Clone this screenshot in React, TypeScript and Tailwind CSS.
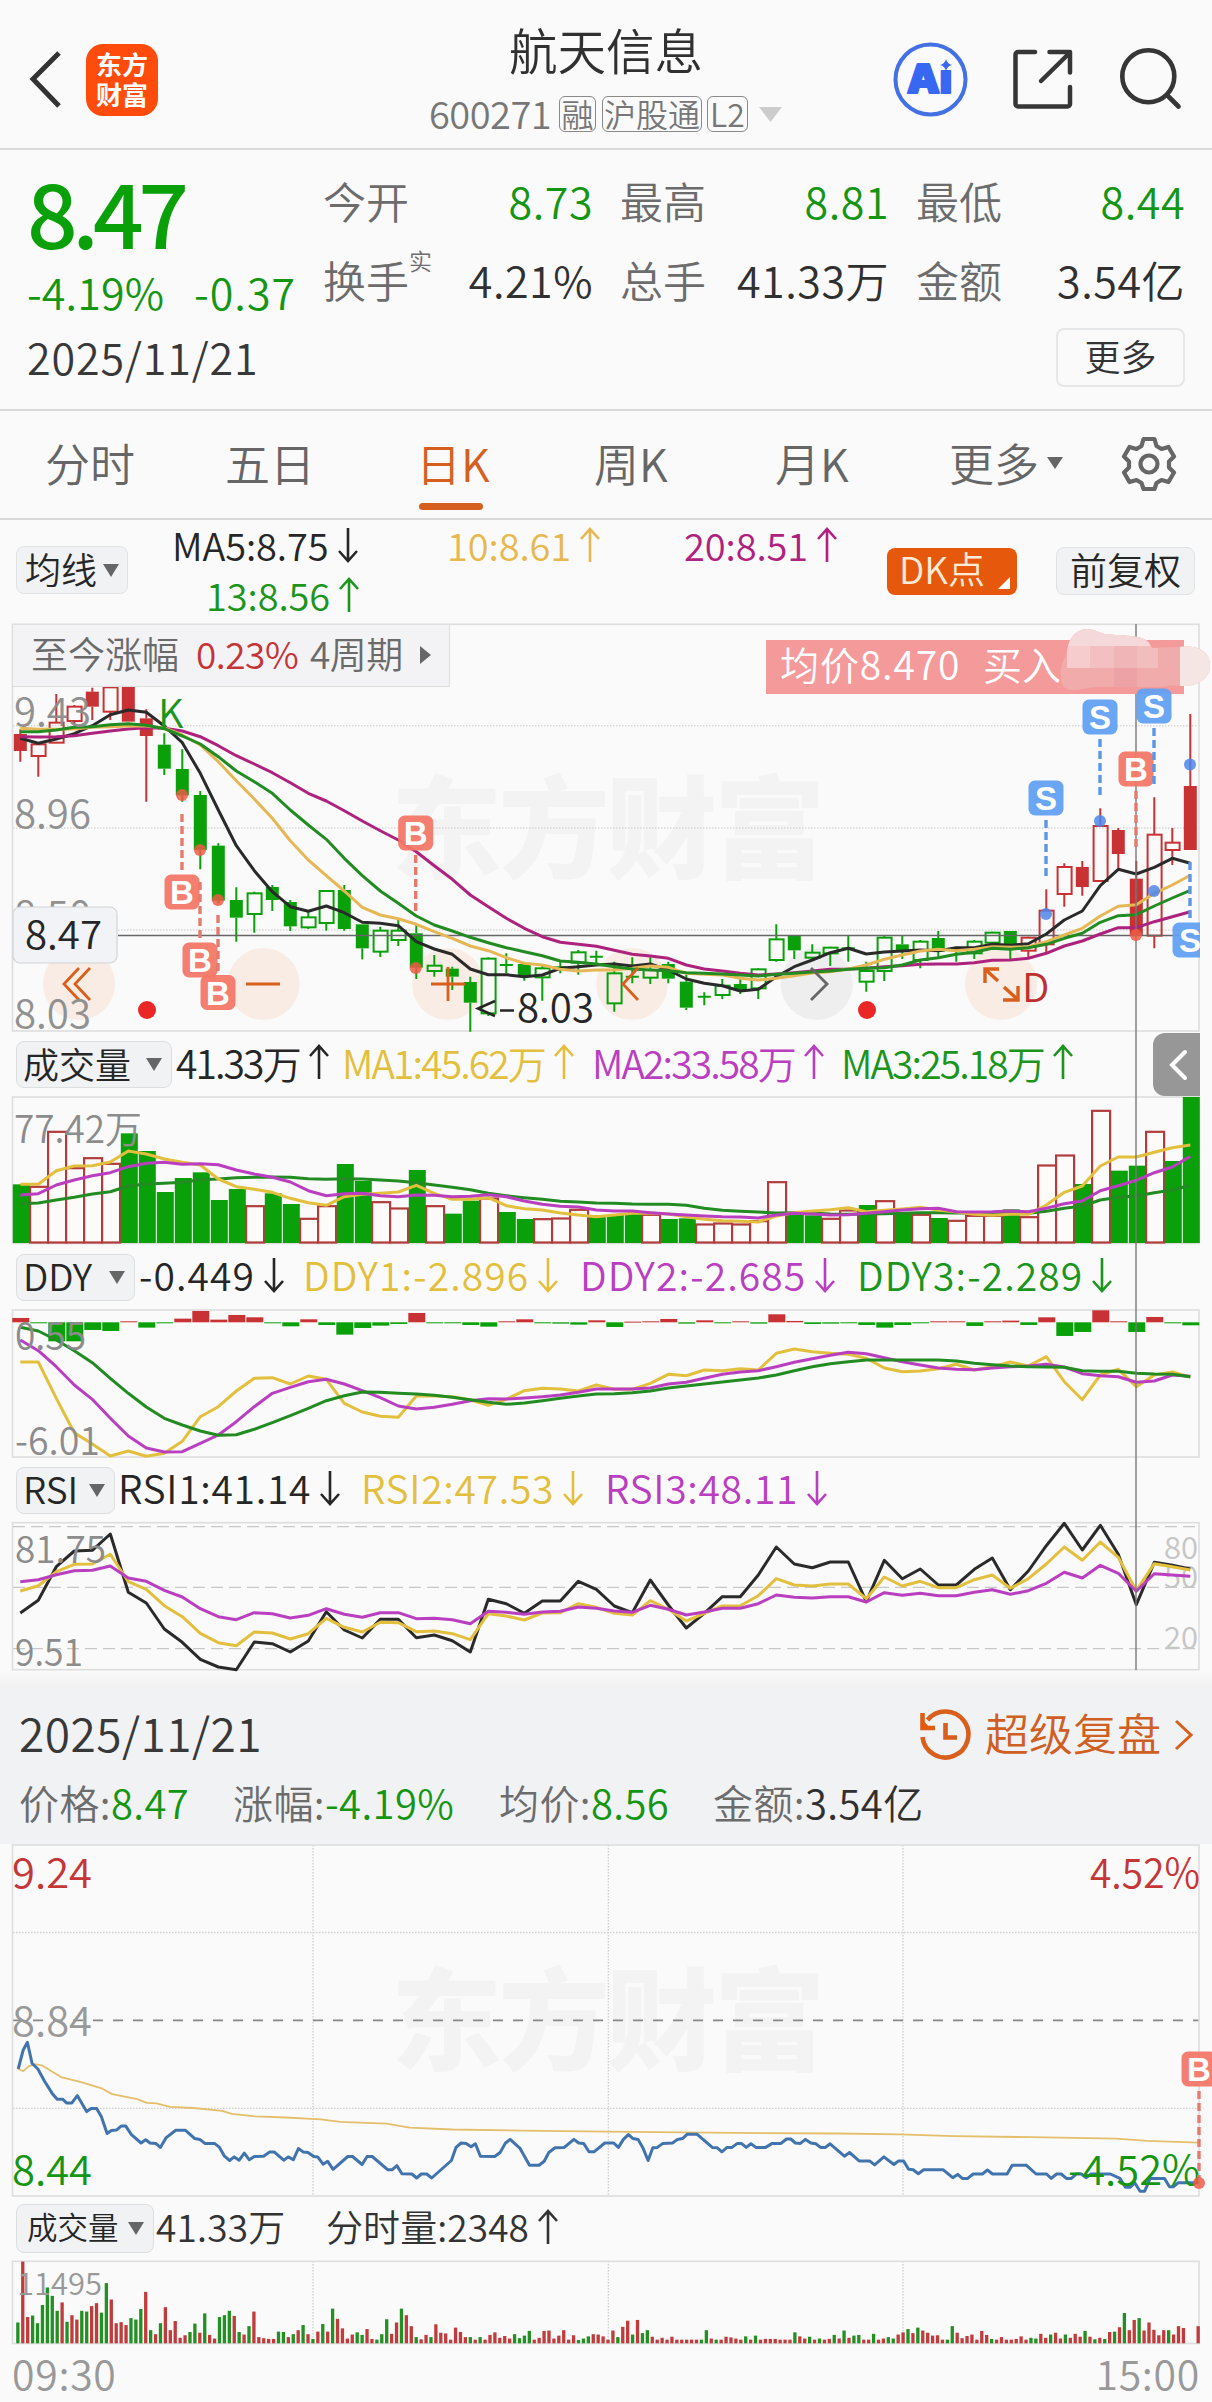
import React from 'react';

const GREEN = '#0aa00a';
const LINE_GREEN = '#228b22';
const RED = '#c93234';
const YELLOW = '#e3bf3e';
const PURPLE = '#b93fc0';

// every daily chart shares the same 66 slots
const slotX = (i: number) => 20.3 + i * 18;

const linePoints = (values: number[], top: number) =>
  values.map((v, i) => `${slotX(i).toFixed(1)},${(top + v / 3).toFixed(1)}`).join(' ');

// [kind, body top, body bottom, high, low] - upper case is a filled body, "+" is a doji
type Candle = [string, number, number, number, number];

const candles: Candle[] = [
  ['R', 372, 423, 358, 455], ['r', 403, 438, 400, 500], ['r', 338, 398, 252, 398], ['r', 290, 333, 285, 345],
  ['R', 245, 290, 233, 330], ['r', 232, 305, 228, 330], ['R', 228, 335, 228, 335], ['R', 325, 378, 298, 575],
  ['G', 404, 476, 370, 495], ['G', 477, 556, 418, 575], ['G', 555, 720, 543, 778], ['G', 707, 872, 700, 880],
  ['G', 870, 923, 832, 995], ['g', 850, 912, 845, 968], ['G', 831, 870, 825, 903], ['G', 876, 949, 870, 963],
  ['g', 922, 952, 905, 957], ['g', 843, 939, 843, 962], ['G', 840, 957, 825, 962], ['G', 943, 1015, 943, 1048],
  ['g', 962, 1025, 950, 1041], ['g', 962, 990, 930, 1008], ['G', 970, 1073, 945, 1107], ['g', 1067, 1083, 1035, 1100],
  ['G', 1076, 1100, 1070, 1140], ['G', 1116, 1178, 1100, 1265], ['g', 1046, 1210, 1042, 1218], ['+', 1065, 1065, 1030, 1090],
  ['G', 1062, 1100, 1058, 1112], ['g', 1075, 1102, 1068, 1172], ['+', 1072, 1072, 1055, 1090], ['g', 1027, 1058, 1020, 1094],
  ['+', 1040, 1040, 1022, 1062], ['g', 1090, 1180, 1055, 1205], ['+', 1100, 1100, 1042, 1120], ['g', 1080, 1103, 1042, 1122],
  ['G', 1062, 1106, 1055, 1120], ['G', 1115, 1193, 1095, 1200], ['+', 1160, 1160, 1147, 1186], ['g', 1127, 1155, 1107, 1167],
  ['G', 1122, 1140, 1105, 1152], ['g', 1078, 1135, 1075, 1167], ['g', 988, 1050, 943, 1055], ['G', 978, 1021, 978, 1047],
  ['g', 1028, 1043, 1003, 1047], ['g', 1013, 1030, 1010, 1068], ['+', 1015, 1015, 978, 1055], ['g', 1083, 1115, 1055, 1145],
  ['g', 983, 1083, 978, 1113], ['G', 1003, 1022, 978, 1047], ['g', 995, 1050, 990, 1075], ['G', 984, 1025, 963, 1040],
  ['+', 1020, 1020, 1010, 1055], ['g', 995, 1030, 990, 1047], ['g', 968, 998, 965, 1000], ['G', 963, 1015, 963, 1053],
  ['r', 983, 1022, 980, 1047], ['r', 902, 1003, 838, 1030], ['r', 771, 852, 760, 890], ['R', 771, 831, 753, 857],
  ['r', 648, 813, 595, 815], ['R', 660, 732, 654, 775], ['R', 806, 978, 753, 978], ['r', 674, 977, 562, 1015],
  ['r', 698, 720, 654, 765], ['R', 528, 720, 312, 720],
];

const ma5 = [385, 400, 387, 371, 347, 314, 300, 307, 348, 398, 490, 600, 707, 782, 845, 890, 904, 888, 908, 937, 940, 947, 995, 1017, 1033, 1077, 1094, 1094, 1100, 1095, 1075, 1070, 1065, 1062, 1068, 1062, 1080, 1107, 1120, 1127, 1143, 1138, 1100, 1070, 1050, 1028, 1015, 1032, 1026, 1023, 1020, 1022, 1013, 1013, 1003, 1006, 1001, 972, 930, 903, 827, 778, 792, 772, 745, 760];
const ma10 = [355, 358, 358, 357, 352, 350, 348, 348, 354, 375, 405, 455, 512, 567, 625, 692, 750, 797, 843, 892, 915, 926, 943, 965, 985, 1008, 1022, 1043, 1060, 1065, 1078, 1083, 1080, 1080, 1075, 1068, 1072, 1090, 1093, 1095, 1105, 1110, 1105, 1097, 1089, 1085, 1077, 1065, 1048, 1035, 1023, 1018, 1022, 1018, 1010, 1012, 1010, 995, 975, 955, 918, 889, 884, 850, 825, 796];
const ma13 = [365, 365, 360, 352, 350, 344, 341, 346, 356, 378, 402, 440, 483, 515, 550, 600, 645, 688, 745, 797, 843, 880, 918, 945, 963, 982, 998, 1013, 1025, 1037, 1053, 1057, 1062, 1070, 1077, 1080, 1082, 1088, 1090, 1092, 1095, 1098, 1093, 1090, 1086, 1083, 1078, 1075, 1073, 1065, 1050, 1043, 1033, 1027, 1015, 1018, 1013, 1003, 985, 970, 937, 917, 914, 888, 864, 841];
const ma20 = [380, 381, 380, 377, 370, 363, 357, 353, 355, 363, 380, 407, 437, 462, 488, 518, 550, 573, 602, 633, 662, 690, 725, 767, 808, 855, 890, 925, 955, 980, 997, 1003, 1009, 1021, 1033, 1038, 1045, 1065, 1077, 1083, 1090, 1095, 1092, 1088, 1083, 1078, 1077, 1075, 1070, 1067, 1063, 1062, 1062, 1058, 1051, 1050, 1045, 1030, 1008, 993, 972, 953, 953, 935, 920, 905];

const volumes = 'G463 R469 R304 R413 R383 R400 G310 G363 G486 G444 G427 G510 G477 R527 G490 G522 R565 R527 G402 G453 R515 R534 G420 R527 G551 G512 R504 G546 G567 R566 R564 R538 G556 G555 G552 R553 G567 G565 R582 R579 R582 R572 R455 G555 G556 R565 R540 G525 R512 G546 R553 G564 R571 R556 R556 G538 R560 R405 R375 G462 R241 G422 G407 R304 G393 G201'.split(' ');
const volMa1 = [463, 463, 422, 408, 407, 396, 363, 372, 387, 397, 405, 447, 470, 478, 487, 505, 518, 526, 500, 493, 490, 486, 466, 490, 508, 508, 503, 527, 536, 540, 549, 555, 560, 555, 550, 549, 552, 560, 568, 572, 574, 576, 558, 548, 543, 539, 533, 545, 541, 537, 532, 540, 546, 553, 556, 553, 553, 525, 487, 468, 408, 381, 381, 367, 353, 345];
const volMa2 = [495, 491, 465, 450, 437, 428, 410, 400, 397, 403, 401, 404, 420, 432, 442, 456, 482, 497, 491, 490, 497, 500, 495, 496, 500, 499, 494, 500, 513, 523, 529, 531, 540, 543, 543, 548, 552, 555, 558, 560, 561, 564, 555, 550, 552, 555, 554, 550, 545, 540, 536, 535, 545, 546, 545, 543, 545, 535, 521, 513, 482, 467, 451, 428, 411, 379];
const volMa3 = [521, 519, 510, 502, 492, 485, 468, 462, 460, 457, 449, 447, 443, 442, 441, 442, 446, 448, 446, 447, 450, 453, 458, 465, 472, 479, 490, 497, 503, 508, 514, 516, 519, 520, 522, 523, 523, 526, 535, 541, 544, 546, 549, 548, 549, 552, 553, 552, 551, 550, 548, 548, 549, 549, 550, 550, 550, 544, 535, 528, 510, 502, 498, 488, 480, 466];

const ddyBars = [13, -2, -57, -57, -23, -26, 3, -16, -2, 11, 34, 8, 22, 15, -2, -12, 9, -8, -37, -17, -10, -5, 28, -2, -3, -8, -13, 3, 9, -2, -4, -7, 6, -14, 2, 3, 10, -4, 6, -2, 3, -4, 24, 4, -5, -4, -2, -8, -16, -8, -2, 3, 3, -11, 3, 5, -8, 15, -41, -29, 36, 3, -29, 16, -2, -9];
const ddy1 = [996, 996, 1105, 1208, 1242, 1278, 1263, 1279, 1270, 1234, 1160, 1130, 1083, 1045, 1043, 1062, 1038, 1048, 1120, 1146, 1159, 1162, 1098, 1098, 1100, 1110, 1126, 1108, 1082, 1075, 1077, 1083, 1065, 1078, 1078, 1060, 1033, 1037, 1020, 1022, 1016, 1020, 970, 957, 965, 970, 973, 985, 1014, 1025, 1023, 1016, 1003, 1020, 1010, 996, 1008, 980, 1055, 1109, 1035, 1018, 1070, 1035, 1026, 1042];
const ddy2 = [930, 962, 1010, 1065, 1108, 1165, 1218, 1254, 1266, 1265, 1240, 1215, 1175, 1130, 1090, 1072, 1055, 1048, 1062, 1082, 1103, 1128, 1137, 1132, 1123, 1112, 1106, 1107, 1104, 1100, 1095, 1087, 1077, 1077, 1077, 1074, 1062, 1057, 1045, 1033, 1026, 1022, 1010, 997, 986, 976, 967, 971, 983, 995, 1005, 1014, 1018, 1019, 1014, 1010, 1008, 1003, 1011, 1031, 1037, 1040, 1057, 1053, 1035, 1039];
const ddy3 = [892, 903, 930, 962, 998, 1045, 1090, 1131, 1165, 1185, 1203, 1216, 1214, 1198, 1178, 1157, 1135, 1112, 1097, 1086, 1087, 1090, 1092, 1096, 1102, 1109, 1117, 1123, 1119, 1112, 1105, 1098, 1092, 1091, 1088, 1083, 1074, 1068, 1062, 1056, 1050, 1044, 1035, 1022, 1010, 1001, 995, 990, 990, 990, 990, 990, 993, 1000, 1004, 1008, 1010, 1011, 1012, 1022, 1024, 1024, 1030, 1032, 1033, 1040];

const rsi1 = [489, 451, 350, 303, 301, 252, 427, 459, 537, 577, 628, 651, 659, 576, 581, 606, 573, 485, 540, 564, 508, 508, 563, 555, 572, 606, 448, 461, 490, 453, 453, 394, 418, 468, 488, 390, 465, 534, 490, 440, 440, 375, 291, 342, 353, 336, 336, 455, 331, 386, 357, 405, 405, 358, 324, 419, 363, 287, 220, 300, 226, 313, 464, 337, 346, 357];
const rsi2 = [423, 407, 365, 343, 342, 313, 395, 418, 467, 500, 550, 578, 587, 546, 549, 567, 551, 505, 532, 546, 517, 518, 545, 543, 551, 569, 491, 498, 510, 489, 488, 461, 472, 490, 495, 452, 478, 513, 490, 468, 467, 437, 386, 405, 408, 402, 402, 446, 381, 408, 394, 413, 413, 389, 375, 415, 386, 342, 291, 331, 276, 322, 422, 341, 350, 360];
const rsi3 = [395, 389, 374, 362, 361, 348, 384, 394, 421, 441, 476, 500, 509, 488, 491, 504, 496, 476, 493, 502, 488, 488, 506, 505, 509, 521, 484, 487, 493, 486, 484, 471, 475, 483, 487, 466, 478, 495, 486, 475, 475, 461, 435, 442, 444, 440, 440, 456, 428, 436, 430, 437, 437, 427, 419, 433, 422, 400, 367, 384, 346, 370, 424, 371, 375, 379];

const minutePrice = [47, 655, 60, 603, 71, 582, 83, 640, 98, 655, 115, 688, 135, 722, 148, 738, 162, 738, 172, 748, 186, 748, 200, 728, 224, 772, 236, 763, 250, 763, 262, 785, 277, 832, 288, 824, 302, 822, 314, 811, 325, 811, 340, 835, 365, 858, 377, 849, 388, 858, 403, 859, 415, 870, 430, 843, 455, 823, 480, 823, 504, 846, 517, 848, 530, 859, 555, 859, 568, 870, 580, 893, 594, 906, 606, 896, 619, 905, 632, 886, 645, 904, 658, 895, 682, 894, 697, 883, 710, 883, 734, 905, 746, 896, 759, 904, 772, 873, 785, 883, 797, 884, 812, 895, 822, 896, 836, 916, 848, 908, 862, 930, 900, 895, 912, 895, 937, 917, 950, 895, 963, 895, 1003, 931, 1015, 931, 1027, 920, 1040, 942, 1066, 943, 1078, 954, 1090, 943, 1104, 943, 1117, 954, 1168, 906, 1180, 870, 1193, 858, 1206, 859, 1219, 868, 1230, 860, 1243, 894, 1280, 895, 1294, 884, 1308, 858, 1320, 848, 1345, 872, 1370, 919, 1395, 919, 1408, 908, 1420, 884, 1436, 871, 1460, 870, 1485, 848, 1497, 858, 1510, 859, 1524, 882, 1537, 882, 1565, 858, 1588, 858, 1600, 870, 1613, 848, 1626, 835, 1638, 846, 1651, 848, 1663, 870, 1677, 906, 1689, 871, 1701, 870, 1715, 859, 1740, 858, 1753, 848, 1766, 846, 1778, 834, 1804, 834, 1843, 870, 1856, 871, 1868, 882, 1881, 870, 1894, 870, 1908, 859, 1918, 859, 1931, 870, 1943, 860, 1956, 870, 1981, 870, 1998, 859, 2021, 859, 2035, 847, 2046, 847, 2058, 858, 2071, 859, 2084, 848, 2098, 858, 2111, 860, 2123, 870, 2136, 870, 2148, 860, 2185, 894, 2198, 884, 2223, 907, 2250, 907, 2263, 918, 2287, 896, 2313, 917, 2325, 907, 2338, 907, 2351, 930, 2363, 931, 2376, 942, 2390, 931, 2440, 931, 2465, 953, 2478, 944, 2490, 955, 2504, 955, 2518, 943, 2542, 943, 2555, 932, 2568, 943, 2606, 943, 2619, 919, 2656, 919, 2681, 943, 2708, 943, 2720, 955, 2734, 943, 2746, 943, 2759, 955, 2772, 955, 2785, 943, 2798, 943, 2810, 953, 2823, 943, 2873, 943, 2898, 955, 2912, 979, 2925, 979, 2936, 967, 2950, 990, 2962, 990, 2976, 955, 3013, 955, 3026, 978, 3036, 978, 3048, 967, 3102, 967];
const minuteAverage = [47, 655, 60, 661, 74, 648, 90, 642, 108, 645, 160, 678, 210, 691, 265, 709, 290, 724, 355, 738, 380, 748, 405, 749, 440, 759, 500, 762, 575, 770, 600, 778, 660, 785, 740, 788, 830, 793, 880, 800, 1000, 805, 1060, 816, 1170, 821, 1350, 824, 1568, 827, 1968, 831, 2168, 832, 2328, 834, 2468, 839, 2668, 842, 2888, 846, 2968, 852, 3102, 857];

// one bar a minute; positive rises, negative falls
const minuteVolume = [-57, 224, 72, -76, -55, -105, -153, -130, -89, 112, -59, 77, 65, -89, -87, 102, 110, -84, -165, 120, 55, 58, 50, -69, -65, -94, 141, -36, 25, -55, 99, 36, 61, 15, 22, -31, -54, 29, -82, 23, 13, -72, -77, -89, 75, -31, 24, -47, 87, 17, 14, 12, 12, -32, -31, 17, -25, 36, -50, 25, -12, 32, -53, 32, -95, 67, 41, 13, 24, -30, -23, 39, 12, -10, -25, -66, 26, 57, -95, 77, 47, -17, 11, 23, -17, 52, 29, 27, 10, 43, 31, 17, -17, 10, -17, 10, 23, 30, 15, 20, 13, -25, -14, -21, -34, 10, 15, 34, 35, 13, 21, 36, 10, 22, -9, -13, -19, 25, 24, 19, 10, 35, -17, 45, 62, -24, 64, -28, -36, 18, 10, 15, 10, 18, 10, 10, 10, 10, 10, -10, -36, 13, -10, 10, 18, 16, 13, 10, -19, 10, -21, 10, 12, 12, 12, 10, 10, 10, -30, 19, 13, -18, 10, -13, 10, 12, -23, 13, -35, 15, -21, -23, 10, 10, -26, 10, 13, -17, -13, 24, 30, -39, 28, -43, 35, 29, 21, 22, 10, -10, -47, 29, 14, 20, 24, 10, 34, 23, -12, 10, 17, 10, 10, 12, 19, 10, -15, -13, 26, 15, -24, 29, 13, -24, 15, 26, 18, -34, 18, -11, 15, -12, 31, -32, 44, -83, 36, 64, -69, 35, 57, 37, 22, 36, -36, 24, 47, 42, 0, 0, 47];

const minutePoints = (values: number[]) => {
  const points: string[] = [];
  for (let i = 0; i < values.length; i += 2) {
    points.push(`${(values[i] / 2.5875).toFixed(1)},${(1830 + values[i + 1] / 2.741).toFixed(1)}`);
  }
  return points.join(' ');
};

function Line({ points, color, width = 3 }: { points: string; color: string; width?: number }) {
  return <polyline points={points} fill="none" stroke={color} strokeWidth={width} strokeLinejoin="round" />;
}

function Frame({ top, bottom }: { top: number; bottom: number }) {
  return <rect x={12.5} y={top} width={1186.5} height={bottom - top} fill="none" stroke="#dedede" strokeWidth={1.6} />;
}

function Watermark({ y }: { y: number }) {
  return (
    <text x={391} y={y} fontSize={111} fontWeight={900} fill="#f3f3f4" textLength={434}>
      东方财富
    </text>
  );
}

function Label({ x, y, children, color = '#8c8c8c', size = 40, width, end }: {
  x: number; y: number; children: string; color?: string; size?: number; width?: number; end?: boolean;
}) {
  return (
    <text x={x} y={y} fill={color} fontSize={size} textLength={width} lengthAdjust="spacingAndGlyphs" textAnchor={end ? 'end' : 'start'}>
      {children}
    </text>
  );
}

interface MarkProps {
  kind: 'B' | 'S';
  x: number;
  y: number;
  from: number;
  to: number;
  dot: number;
}

function Mark({ kind, x, y, from, to, dot }: MarkProps) {
  const fill = kind === 'B' ? '#f37767' : '#62a0f3';
  return (
    <g>
      <line x1={x} x2={x} y1={from} y2={to} stroke={kind === 'B' ? '#e57a6c' : '#5b97e6'} strokeWidth={3.4} strokeDasharray="8 4" />
      <circle cx={x} cy={dot} r={6} fill={kind === 'B' ? '#ee5a45' : '#4c86ea'} opacity={0.85} />
      <rect x={x - 17.5} y={y - 17.5} width={35} height={35} rx={6.5} fill={fill} opacity={0.94} />
      <text x={x} y={y + 12} fill="#fff" fontSize={33} fontWeight={700} textAnchor="middle" fontFamily="Liberation Sans, sans-serif">
        {kind}
      </text>
    </g>
  );
}

const marks: MarkProps[] = [
  { kind: 'B', x: 182, y: 892, from: 814, to: 870, dot: 795 },
  { kind: 'B', x: 200, y: 960, from: 882, to: 938, dot: 850 },
  { kind: 'B', x: 218, y: 992.5, from: 915, to: 971, dot: 900 },
  { kind: 'B', x: 415.7, y: 833, from: 855, to: 911, dot: 968 },
  { kind: 'B', x: 1136, y: 769, from: 791, to: 848, dot: 935 },
  { kind: 'S', x: 1046, y: 798, from: 820, to: 876, dot: 914 },
  { kind: 'S', x: 1100, y: 717, from: 739, to: 795, dot: 821 },
  { kind: 'S', x: 1154, y: 706, from: 728, to: 784, dot: 891 },
  { kind: 'S', x: 1190, y: 940, from: 862, to: 918, dot: 764.5 },
];

function Arrow({ up }: { up?: boolean }) {
  return (
    <svg className="ml-[9px] h-9 w-5 shrink-0" viewBox="0 0 20 36" fill="none" stroke="currentColor" strokeWidth={2.6}>
      <path d={up ? 'M10 35V2M1 12l9-10 9 10' : 'M10 1v33M1 24l9 10 9-10'} />
    </svg>
  );
}

function Caret({ className }: { className: string }) {
  return (
    <svg className={className} viewBox="0 0 16 13" preserveAspectRatio="none">
      <path d="M0 0h16L8 13z" fill="currentColor" />
    </svg>
  );
}

function Picker({ label, className }: { label: string; className: string }) {
  return (
    <button className={`flex shrink-0 items-center justify-between rounded-lg border border-[#dcdee0] bg-[#f1f2f4] pr-[9px] text-[#262626] ${className}`}>
      <span className="pb-1">{label}</span>
      <Caret className="h-[13px] w-4 text-[#666]" />
    </button>
  );
}

interface Reading {
  text: string;
  up?: boolean;
  className: string;
}

function Readings({ items }: { items: Reading[] }) {
  return (
    <>
      {items.map(({ text, up, className }) => (
        <div key={text} className={`flex shrink-0 items-center pb-[5px] text-[39px] leading-none whitespace-nowrap ${className}`}>
          {text}
          <Arrow up={up} />
        </div>
      ))}
    </>
  );
}

function Header() {
  return (
    <header className="flex h-[150px] items-start border-b-2 border-[#dadada]">
      <svg className="mt-[50px] ml-7 h-[60px] w-9" viewBox="0 0 36 60" fill="none" stroke="#333" strokeWidth={5}>
        <path d="M31 3L5 29l26 27" />
      </svg>
      <div className="mt-11 ml-[22px] flex size-[72px] flex-col items-center justify-center rounded-[17px] bg-[#ff4b0c] pb-[3px] text-[26px] leading-[30px] font-bold text-white">
        <span>东方</span>
        <span>财富</span>
      </div>
      <div className="ml-[271px] flex w-[353px] flex-col">
        <h1 className="mt-[19px] ml-[80px] text-[48.5px] leading-[60px] text-[#303030]">航天信息</h1>
        <div className="mt-[17px] flex h-9 items-center text-[32px] leading-none text-[#777]">
          <span className="w-[130px] pb-[3px] text-[38px] tracking-[-0.5px]">600271</span>
          <span className="flex h-9 w-[37px] items-center justify-center rounded-md border-[1.5px] border-[#8a8a8a] pb-0.5">融</span>
          <span className="ml-1.5 flex h-9 w-[100px] items-center justify-center rounded-md border-[1.5px] border-[#8a8a8a] pb-0.5">沪股通</span>
          <span className="ml-[5px] flex h-9 w-[41px] items-center justify-center rounded-md border-[1.5px] border-[#8a8a8a] pb-0.5">L2</span>
          <Caret className="ml-[11px] h-[15px] w-[23px] text-[#ccc]" />
        </div>
      </div>
      <svg className="mt-[42px] ml-[111px] size-[75px]" viewBox="0 0 75 75">
        <circle cx="37.5" cy="37.5" r="35" fill="none" stroke="#4470e6" strokeWidth={4} />
        <text
          x={14}
          y={50.5}
          fontSize={40}
          fontWeight={900}
          fill="#3867f2"
          stroke="#3867f2"
          strokeWidth={2.2}
          strokeLinejoin="round"
          textLength={45}
          lengthAdjust="spacingAndGlyphs"
          fontFamily="Inter, sans-serif"
        >
          Aı
        </text>
        <path d="M53 17q1.300 4.800 6 6-4.700 1.200-6 6-1.300-4.800-6-6 4.700-1.200 6-6z" fill="#3867f2" />
      </svg>
      <svg className="mt-[47px] ml-[43px] h-16 w-16" viewBox="0 0 64 64" fill="none" stroke="#363636" strokeWidth={4.500} strokeLinecap="round" strokeLinejoin="round">
        <path d="M24 5H7a2.500 2.500 0 0 0-2.500 2.500V57A2.500 2.500 0 0 0 7 59.500h49.500a2.500 2.500 0 0 0 2.500-2.500V40" />
        <path d="M38.500 5H59v20.500M58 6.500L30 34" />
      </svg>
      <svg className="mt-[46px] ml-[43px] h-16 w-16" viewBox="0 0 64 64" fill="none" stroke="#363636" strokeWidth={4.600} strokeLinecap="round">
        <circle cx="30.300" cy="30.300" r="26" />
        <path d="M50 50l10.500 10.500" />
      </svg>
    </header>
  );
}

function Stat({ label, value, note, className }: { label: string; value: string; note?: string; className: string }) {
  return (
    <div className="flex h-[60px] items-center justify-between text-[43px] leading-none whitespace-nowrap">
      <span className="relative text-[#6c6c6c]">
        {label}
        {note && <sup className="absolute -top-[9px] left-full text-[23px] leading-none">{note}</sup>}
      </span>
      <span className={`tracking-[0.5px] ${className}`}>{value}</span>
    </div>
  );
}

function Quote() {
  return (
    <section className="flex h-[261px] border-b-2 border-[#dadada] pl-[27px]">
      <div className="w-[296px] shrink-0 whitespace-nowrap text-[#149614]">
        <div className="mt-[17px] h-[88px] text-[89px] leading-[88px] font-medium tracking-[-5.6px] text-[#0aa00a]">8.47</div>
        <div className="mt-[11px] flex h-[50px] items-center text-[43px] tracking-[0.1px]">
          <span className="w-[167px]">-4.19%</span>
          <span className="tracking-[1px]">-0.37</span>
        </div>
        <div className="mt-[15px] flex h-[50px] items-center text-[43px] tracking-[0.9px] text-[#383838]">2025/11/21</div>
      </div>
      <div className="flex flex-col">
        <div className="mt-[20px] grid grid-cols-[270px_269px_269px] gap-x-[27px] gap-y-[19px]">
          <Stat label="今开" value="8.73" className="text-[#149614]" />
          <Stat label="最高" value="8.81" className="text-[#149614]" />
          <Stat label="最低" value="8.44" className="text-[#149614]" />
          <Stat label="换手" note="实" value="4.21%" className="text-[#303030]" />
          <Stat label="总手" value="41.33万" className="text-[#303030]" />
          <Stat label="金额" value="3.54亿" className="text-[#303030]" />
        </div>
        <button className="mt-[19px] h-[59px] w-[129px] self-end rounded-lg border-2 border-[#e6e7e9] pb-1.5 text-4xl leading-none text-[#333]">更多</button>
      </div>
    </section>
  );
}

function Tabs() {
  return (
    <nav className="flex h-[109px] border-b-2 border-[#dadada] pt-[22px] pl-[45px] text-[45px] leading-[60px] whitespace-nowrap text-[#666]">
      <span className="w-[180px]">分时</span>
      <span className="w-[191px]">五日</span>
      <span className="flex w-[178px] flex-col text-[#d55f1e]">
        日K
        <i className="mt-[10px] ml-[3px] h-[7px] w-16 rounded-full bg-[#d55f1e]" />
      </span>
      <span className="w-[181px]">周K</span>
      <span className="w-[174px]">月K</span>
      <span className="flex h-[60px] w-[172px] items-center">
        更多
        <Caret className="ml-2 h-3 w-4" />
      </span>
      <svg className="mt-[2px] size-[56px]" viewBox="0 0 56 56" fill="none" stroke="#666" strokeWidth={4.200} strokeLinejoin="round">
        <path d="M22.500 4h11l2 7 5 3 7-2 5.500 9.500-5 5v6l5 5L47.500 47l-7-2-5 3-2 6h-11l-2-6-5-3-7 2L3 37.500l5-5v-6l-5-5L8.500 12l7 2 5-3z" />
        <circle cx="28" cy="29" r="8.500" />
      </svg>
    </nav>
  );
}

function Averages() {
  return (
    <section className="flex h-[103px] pl-4 text-[#262626]">
      <button className="mt-[26px] flex h-12 w-[112px] items-center justify-between rounded-lg border border-[#e0e2e4] bg-[#f1f2f4] px-2 text-4xl leading-none">
        <span className="pb-1">均线</span>
        <Caret className="h-[13px] w-4 text-[#666]" />
      </button>
      <div className="ml-[44px] grid h-[98px] w-[715px] grid-cols-[275px_237px_203px] content-start leading-[50px] tracking-[-0.1px]">
        <div className="flex h-[50px] items-center text-[38px]">MA5:8.75<Arrow /></div>
        <div className="flex h-[50px] items-center text-[38px] text-[#e8b850]">10:8.61<Arrow up /></div>
        <div className="flex h-[50px] items-center text-[38px] text-[#b0217f]">20:8.51<Arrow up /></div>
        <div className="flex h-[50px] items-center pl-[34px] text-[38px] text-[#1b951b]">13:8.56<Arrow up /></div>
      </div>
      <button className="relative mt-7 h-[47px] w-[130px] rounded-lg bg-[#e6590c] pb-[7px] pl-3 text-left text-[37px] leading-none text-[#fdebd8]">
        DK点
        <svg className="absolute right-[7px] bottom-[6px] size-3" viewBox="0 0 12 12">
          <path d="M12 0v12H0z" fill="#fff" />
        </svg>
      </button>
      <button className="mt-[27px] ml-[39px] h-12 w-[139px] rounded-lg border border-[#e0e2e4] bg-[#f1f2f4] pb-1 text-[37px] leading-none">前复权</button>
    </section>
  );
}

function CandleShape({ candle, index }: { candle: Candle; index: number }) {
  const [kind, top, bottom, high, low] = candle;
  const x = slotX(index);
  const y = (v: number) => 610 + v / 3;
  const color = kind.toLowerCase() === 'r' ? RED : GREEN;
  if (kind === '+') {
    return <path d={`M${x} ${y(high)}V${y(low)}M${x - 6.5} ${y(top)}h13`} stroke={color} strokeWidth={2} />;
  }
  const solid = kind === 'R' || kind === 'G';
  return (
    <g stroke={color} strokeWidth={2}>
      <path d={`M${x} ${y(high)}V${y(top)}M${x} ${y(bottom)}V${y(low)}`} />
      {solid ? (
        <rect x={x - 6.5} y={y(top)} width={13} height={Math.max(1, y(bottom) - y(top))} fill={color} stroke="none" />
      ) : (
        <rect x={x - 6.7} y={y(top)} width={14} height={y(bottom) - y(top)} fill="none" />
      )}
    </g>
  );
}

function KChart() {
  return (
    <div className="relative h-[410px]">
      <svg className="block h-[410px] w-full" viewBox="0 623 1212 410">
        <Watermark y={870} />
        {[725.7, 828, 930].map((y) => (
          <line key={y} x1={13} x2={1199} y1={y} y2={y} stroke="#d9d9d9" strokeWidth={1.4} strokeDasharray="1.5 1.5" />
        ))}
        <Frame top={624.3} bottom={1031} />
        {[79, 263.5, 448, 632, 1001].map((x) => (
          <circle key={x} cx={x} cy={984} r={36} fill="#f9ece5" />
        ))}
        <circle cx={816.7} cy={984} r={36} fill="#eeeeef" />
        {candles.map((candle, i) => (
          <CandleShape key={i} candle={candle} index={i} />
        ))}
        <line x1={118} x2={1199} y1={935.5} y2={935.5} stroke="#666" strokeWidth={1.3} />
        <Line points={linePoints(ma5, 610)} color="#2a2a2a" />
        <Line points={linePoints(ma20, 610)} color="#ad227c" />
        <Line points={linePoints(ma10, 610)} color="#e6b855" />
        <Line points={linePoints(ma13, 610)} color={LINE_GREEN} />
        <g fill="none" stroke="#d8601c" strokeWidth={2.8}>
          <path d="M79 968l-15 16 15 16M90 968l-15 16 15 16" />
          <path d="M246 984h34" />
          <path d="M431 984h34M448 967v34" />
          <path d="M638 968l-15 16 15 16" />
          <path d="M999 969h-14v14M986 970l12 11M1003 1000h15v-14M1017 999l-13-12" strokeWidth={3.4} />
          <path d="M811 968l16 16-16 16" stroke="#666" />
        </g>
        <g opacity={0.95}>
          <Label x={14} y={726} width={77}>9.43</Label>
          <Label x={14} y={828} width={77}>8.96</Label>
          <Label x={14} y={929} width={77}>8.50</Label>
          <Label x={14} y={1028} width={77}>8.03</Label>
        </g>
        <rect x={13} y={907} width={104} height={56} rx={7} fill="#f2f3f6" stroke="#d2d4d8" strokeWidth={1.2} />
        <Label x={25} y={949} width={77} color="#262626">8.47</Label>
        <Label x={158} y={728} color="#1b951b">K</Label>
        <Label x={1022} y={1002} color="#bd3030">D</Label>
        <circle cx={147} cy={1010} r={9} fill="#ea2627" />
        <circle cx={867} cy={1010} r={9} fill="#ea2627" />
        <path d="M495 1001l-17 7.500 17 7.500M500 1010.500h14" fill="none" stroke="#262626" strokeWidth={2.600} />
        <Label x={517} y={1022} width={77} color="#262626">8.03</Label>
      </svg>
      <div className="absolute top-px left-3 flex h-[63px] w-[438px] items-center border border-[#dedede] bg-[#f3f3f6] pb-1 pl-[18px] text-[37px] leading-none whitespace-nowrap text-[#6a6a6a]">
        <span className="w-[165px]">至今涨幅</span>
        <span className="w-[114px] tracking-[-0.5px] text-[#c43636]">0.23%</span>
        <span className="w-[110px] tracking-[-0.5px]">4周期</span>
        <svg className="mt-[3px] h-[18px] w-[11px]" viewBox="0 0 11 18">
          <path d="M0 0l11 9-11 9z" fill="#666" />
        </svg>
      </div>
      <div className="absolute top-[17px] left-[766px] z-20 flex h-[54px] w-[418px] items-center bg-[#f49a9a] pb-[7px] pl-[14px] text-[39px] leading-none whitespace-nowrap text-white">
        <span className="w-[203px] tracking-[0.9px]">均价8.470</span>
        <span>买入</span>
      </div>
      <svg className="absolute top-0 left-0 z-20 h-[410px] w-full" viewBox="0 623 1212 410">
        <clipPath id="smudge">
          <path d="M1068 646c2-10 10-17 19-17 8 0 12 4 18 5 14 2 34 0 42 7 4 3 3 6 6 7l27-1c14-2 30 2 30 18 0 15-14 22-30 21-12-1-20 1-34 1l-50 0c-14 1-28 8-34-3-2-8-2-20 4-28z" />
        </clipPath>
        <g clipPath="url(#smudge)">
          <rect x={1055} y={625} width={160} height={70} fill="#f1abab" />
          <rect x={1055} y={625} width={100} height={21} fill="#f5d9da" />
          <rect x={1067} y={646} width={23} height={22} fill="#f6cccd" />
          <rect x={1090} y={646} width={24} height={22} fill="#f4bfc0" />
          <rect x={1114} y={646} width={23} height={22} fill="#efb5b7" />
          <rect x={1137} y={646} width={21} height={22} fill="#f1bdbd" />
          <rect x={1158} y={646} width={22} height={22} fill="#f0abab" />
          <rect x={1114} y={668} width={23} height={25} fill="#eda3a5" />
          <rect x={1180} y={640} width={35} height={50} fill="#f5e6e3" />
        </g>
        {marks.map((mark) => (
          <Mark key={`${mark.x}-${mark.y}`} {...mark} />
        ))}
        <rect x={1200} y={900} width={12} height={70} fill="#fafafa" />
      </svg>
    </div>
  );
}

function VolumeChart() {
  return (
    <svg className="block h-[149px] w-full" viewBox="0 1096 1212 149">
      <Frame top={1097} bottom={1243.5} />
      {volumes.map((item, i) => {
        const top = 1030 + Number(item.slice(1)) / 3;
        return item[0] === 'G' ? (
          <rect key={i} x={slotX(i) - 7.5} y={top} width={17} height={1243 - top} fill={GREEN} />
        ) : (
          <rect key={i} x={slotX(i) - 8.2} y={top + 0.5} width={18} height={1242 - top} fill="#fdfafa" stroke="#b23c3c" strokeWidth={2.2} />
        );
      })}
      <Line points={linePoints(volMa3, 1030)} color={LINE_GREEN} />
      <Line points={linePoints(volMa1, 1030)} color={YELLOW} />
      <Line points={linePoints(volMa2, 1030)} color={PURPLE} />
      <Label x={14} y={1143} size={38} width={128}>77.42万</Label>
    </svg>
  );
}

function DdyChart() {
  return (
    <svg className="block h-[150px] w-full" viewBox="0 1309 1212 150">
      <Frame top={1310} bottom={1457} />
      {ddyBars.map((v, i) => (
        <rect
          key={i}
          x={slotX(i) - 8}
          y={v > 0 ? 1322.3 - v / 3 : 1322.3}
          width={17}
          height={Math.max(1, Math.abs(v) / 3)}
          fill={v > 0 ? RED : GREEN}
        />
      ))}
      <Line points={linePoints(ddy1, 1030)} color={YELLOW} />
      <Line points={linePoints(ddy2, 1030)} color={PURPLE} />
      <Line points={linePoints(ddy3, 1030)} color={LINE_GREEN} />
      <Label x={15} y={1350} size={39} width={71}>0.55</Label>
      <Label x={15} y={1455} size={39} width={85}>-6.01</Label>
    </svg>
  );
}

function RsiChart() {
  return (
    <svg className="block h-[151px] w-full" viewBox="0 1521 1212 151">
      <Frame top={1522.7} bottom={1669.7} />
      {[1526.7, 1587.3, 1648.7].map((y) => (
        <line key={y} x1={13} x2={1199} y1={y} y2={y} stroke="#c8c8c8" strokeWidth={1.3} strokeDasharray="12 6" />
      ))}
      <Label x={1198} y={1559} size={31} color="#c6c6c6" end>80</Label>
      <Label x={1198} y={1588} size={31} color="#c6c6c6" end>50</Label>
      <Label x={1198} y={1649} size={31} color="#c6c6c6" end>20</Label>
      <Line points={linePoints(rsi1, 1450)} color="#2a2a2a" />
      <Line points={linePoints(rsi2, 1450)} color={YELLOW} />
      <Line points={linePoints(rsi3, 1450)} color={PURPLE} />
      <Label x={15} y={1562.5} size={38} width={91}>81.75</Label>
      <Label x={15} y={1666} size={38} width={68}>9.51</Label>
    </svg>
  );
}

function ReviewPanel() {
  return (
    <section className="h-[156px] bg-[#f1f2f4] pt-[17px] pl-[19px] whitespace-nowrap">
      <div className="flex h-[60px] items-center">
        <span className="w-[899px] pb-1.5 text-[46px] leading-none tracking-[0.5px] text-[#383838]">2025/11/21</span>
        <svg className="size-[54px]" viewBox="0 0 54 54" fill="none" stroke="#d8601c" strokeWidth={4.600}>
          <path d="M4.500 29a23 23 0 1 0 5-17" />
          <path d="M4.500 5v15H17M27.500 15v14.500H39" />
          <path d="M3 10l10 11H3z" fill="#e6590c" stroke="none" />
        </svg>
        <span className="ml-[13px] pb-1.5 text-[44px] leading-none text-[#cf5f22]">超级复盘</span>
        <svg className="ml-[13px] h-8 w-5" viewBox="0 0 20 32" fill="none" stroke="#d8601c" strokeWidth={3}>
          <path d="M2 2l15 14L2 30" />
        </svg>
      </div>
      <div className="mt-[7px] flex h-[60px] items-center text-[40px] leading-none tracking-[0.4px] text-[#6c6c6c]">
        <span className="w-[214px]">价格:<span className="text-[#149614]">8.47</span></span>
        <span className="w-[266px]">涨幅:<span className="text-[#149614]">-4.19%</span></span>
        <span className="w-[214px]">均价:<span className="text-[#149614]">8.56</span></span>
        <span>金额:<span className="text-[#303030]">3.54亿</span></span>
      </div>
    </section>
  );
}

function MinuteChart() {
  return (
    <svg className="block h-[353px] w-full" viewBox="0 1844 1212 353">
      <Watermark y={2062} />
      <g stroke="#d0d0d0" strokeWidth={1.3} strokeDasharray="1.5 1.5">
        {[313, 608.3, 903].map((x) => (
          <line key={x} x1={x} x2={x} y1={1845} y2={2196} />
        ))}
        <line x1={13} x2={1199} y1={1932.5} y2={1932.5} />
        <line x1={13} x2={1199} y1={2108.4} y2={2108.4} />
      </g>
      <line x1={13} x2={1199} y1={2020.4} y2={2020.4} stroke="#888" strokeWidth={1.8} strokeDasharray="10 10" />
      <Frame top={1845} bottom={2196} />
      <Line points={minutePoints(minuteAverage)} color="#e4be6a" width={1.8} />
      <Line points={minutePoints(minutePrice)} color="#4174ad" />
      <Label x={12} y={1888} size={41} width={80} color="#c53636">9.24</Label>
      <Label x={12} y={2036} size={41} width={80} color="#999">8.84</Label>
      <Label x={12} y={2185} size={41} width={80} color="#149614">8.44</Label>
      <Label x={1200} y={1888} size={41} width={110} color="#c53636" end>4.52%</Label>
      <Label x={1200} y={2185} size={41} width={132} color="#149614" end>-4.52%</Label>
      <Mark kind="B" x={1199} y={2069} from={2091} to={2178} dot={2183} />
    </svg>
  );
}

function MinuteVolume() {
  return (
    <svg className="block h-[85px] w-full" viewBox="0 2260 1212 85">
      <g stroke="#d0d0d0" strokeWidth={1.3} strokeDasharray="1.5 1.5">
        {[313, 608.3, 903].map((x) => (
          <line key={x} x1={x} x2={x} y1={2261} y2={2343} />
        ))}
      </g>
      <Frame top={2261.3} bottom={2343.5} />
      {minuteVolume.map((v, i) => {
        const h = Math.abs(v) / 2.741;
        return <rect key={i} x={16.2 + i * 4.918} y={2343.3 - h} width={3.3} height={h} fill={v > 0 ? '#c03c3c' : '#229022'} />;
      })}
      <Label x={17} y={2295} size={31} width={85} color="#999">11495</Label>
    </svg>
  );
}

export default function App() {
  return (
    <main className="w-[1212px] overflow-hidden bg-[#fafafa] font-['Noto_Sans_CJK_SC',sans-serif] font-[350]">
      <Header />
      <Quote />
      <Tabs />
      <Averages />
      <div className="relative">
        <KChart />
        <div className="flex h-[63px] items-center pl-4">
          <Picker label="成交量" className="h-[47px] w-[156px] pl-1.5 text-4xl leading-none" />
          <div className="flex w-[981px] pl-1 tracking-[-1.9px]">
            <Readings
              items={[
                { text: '41.33万', up: true, className: 'w-[166px] text-[#262626]' },
                { text: 'MA1:45.62万', up: true, className: 'w-[250px] text-[#e3bf3e]' },
                { text: 'MA2:33.58万', up: true, className: 'w-[249px] text-[#b93fc0]' },
                { text: 'MA3:25.18万', up: true, className: 'text-[#1b951b]' },
              ]}
            />
          </div>
          <button className="flex h-[63px] w-[47px] items-center justify-center rounded-l-xl bg-[#979797] pl-1">
            <svg className="h-8 w-5" viewBox="0 0 20 32" fill="none" stroke="#fff" strokeWidth={4} strokeLinecap="round">
              <path d="M16 3L3 16l13 13" />
            </svg>
          </button>
        </div>
        <VolumeChart />
        <div className="flex h-16 items-center pl-4">
          <Picker label="DDY" className="h-[47px] w-[119px] pl-1.5 text-[37px] leading-none" />
          <div className="flex pl-1 tracking-[1.1px]">
            <Readings
              items={[
                { text: '-0.449', className: 'w-[164px] text-[#262626]' },
                { text: 'DDY1:-2.896', className: 'w-[277px] text-[#e3bf3e]' },
                { text: 'DDY2:-2.685', className: 'w-[277px] text-[#b93fc0]' },
                { text: 'DDY3:-2.289', className: 'text-[#1b951b]' },
              ]}
            />
          </div>
        </div>
        <DdyChart />
        <div className="flex h-[62px] items-center pl-4">
          <Picker label="RSI" className="h-[47px] w-[99px] pl-1.5 text-[37px] leading-none" />
          <div className="flex pl-[3px] tracking-[0.7px]">
            <Readings
              items={[
                { text: 'RSI1:41.14', className: 'w-[243px] text-[#262626]' },
                { text: 'RSI2:47.53', className: 'w-[244px] text-[#e3bf3e]' },
                { text: 'RSI3:48.11', className: 'text-[#b93fc0]' },
              ]}
            />
          </div>
        </div>
        <RsiChart />
        <div className="absolute top-px bottom-[2px] left-[1135px] z-10 w-[1.5px] bg-[#777]/70" />
      </div>
      <div className="h-4 bg-linear-to-b from-[#fafafa] to-[#f0f0f1]" />
      <ReviewPanel />
      <MinuteChart />
      <div className="flex h-[63px] items-center pl-4 text-[37px] leading-none whitespace-nowrap text-[#333]">
        <Picker label="成交量" className="h-[49px] w-[138px] pl-2.5 text-[30.5px]" />
        <span className="ml-[2px] w-[170px] pb-1 tracking-[0.2px]">41.33万</span>
        <span className="flex items-center pb-1 tracking-[0.1px]">分时量:2348<Arrow up /></span>
      </div>
      <MinuteVolume />
      <div className="flex h-[57px] items-center justify-between pr-3 pb-[3px] pl-3 text-[41px] leading-none tracking-[0.7px] text-[#999]">
        <span>09:30</span>
        <span>15:00</span>
      </div>
    </main>
  );
}
